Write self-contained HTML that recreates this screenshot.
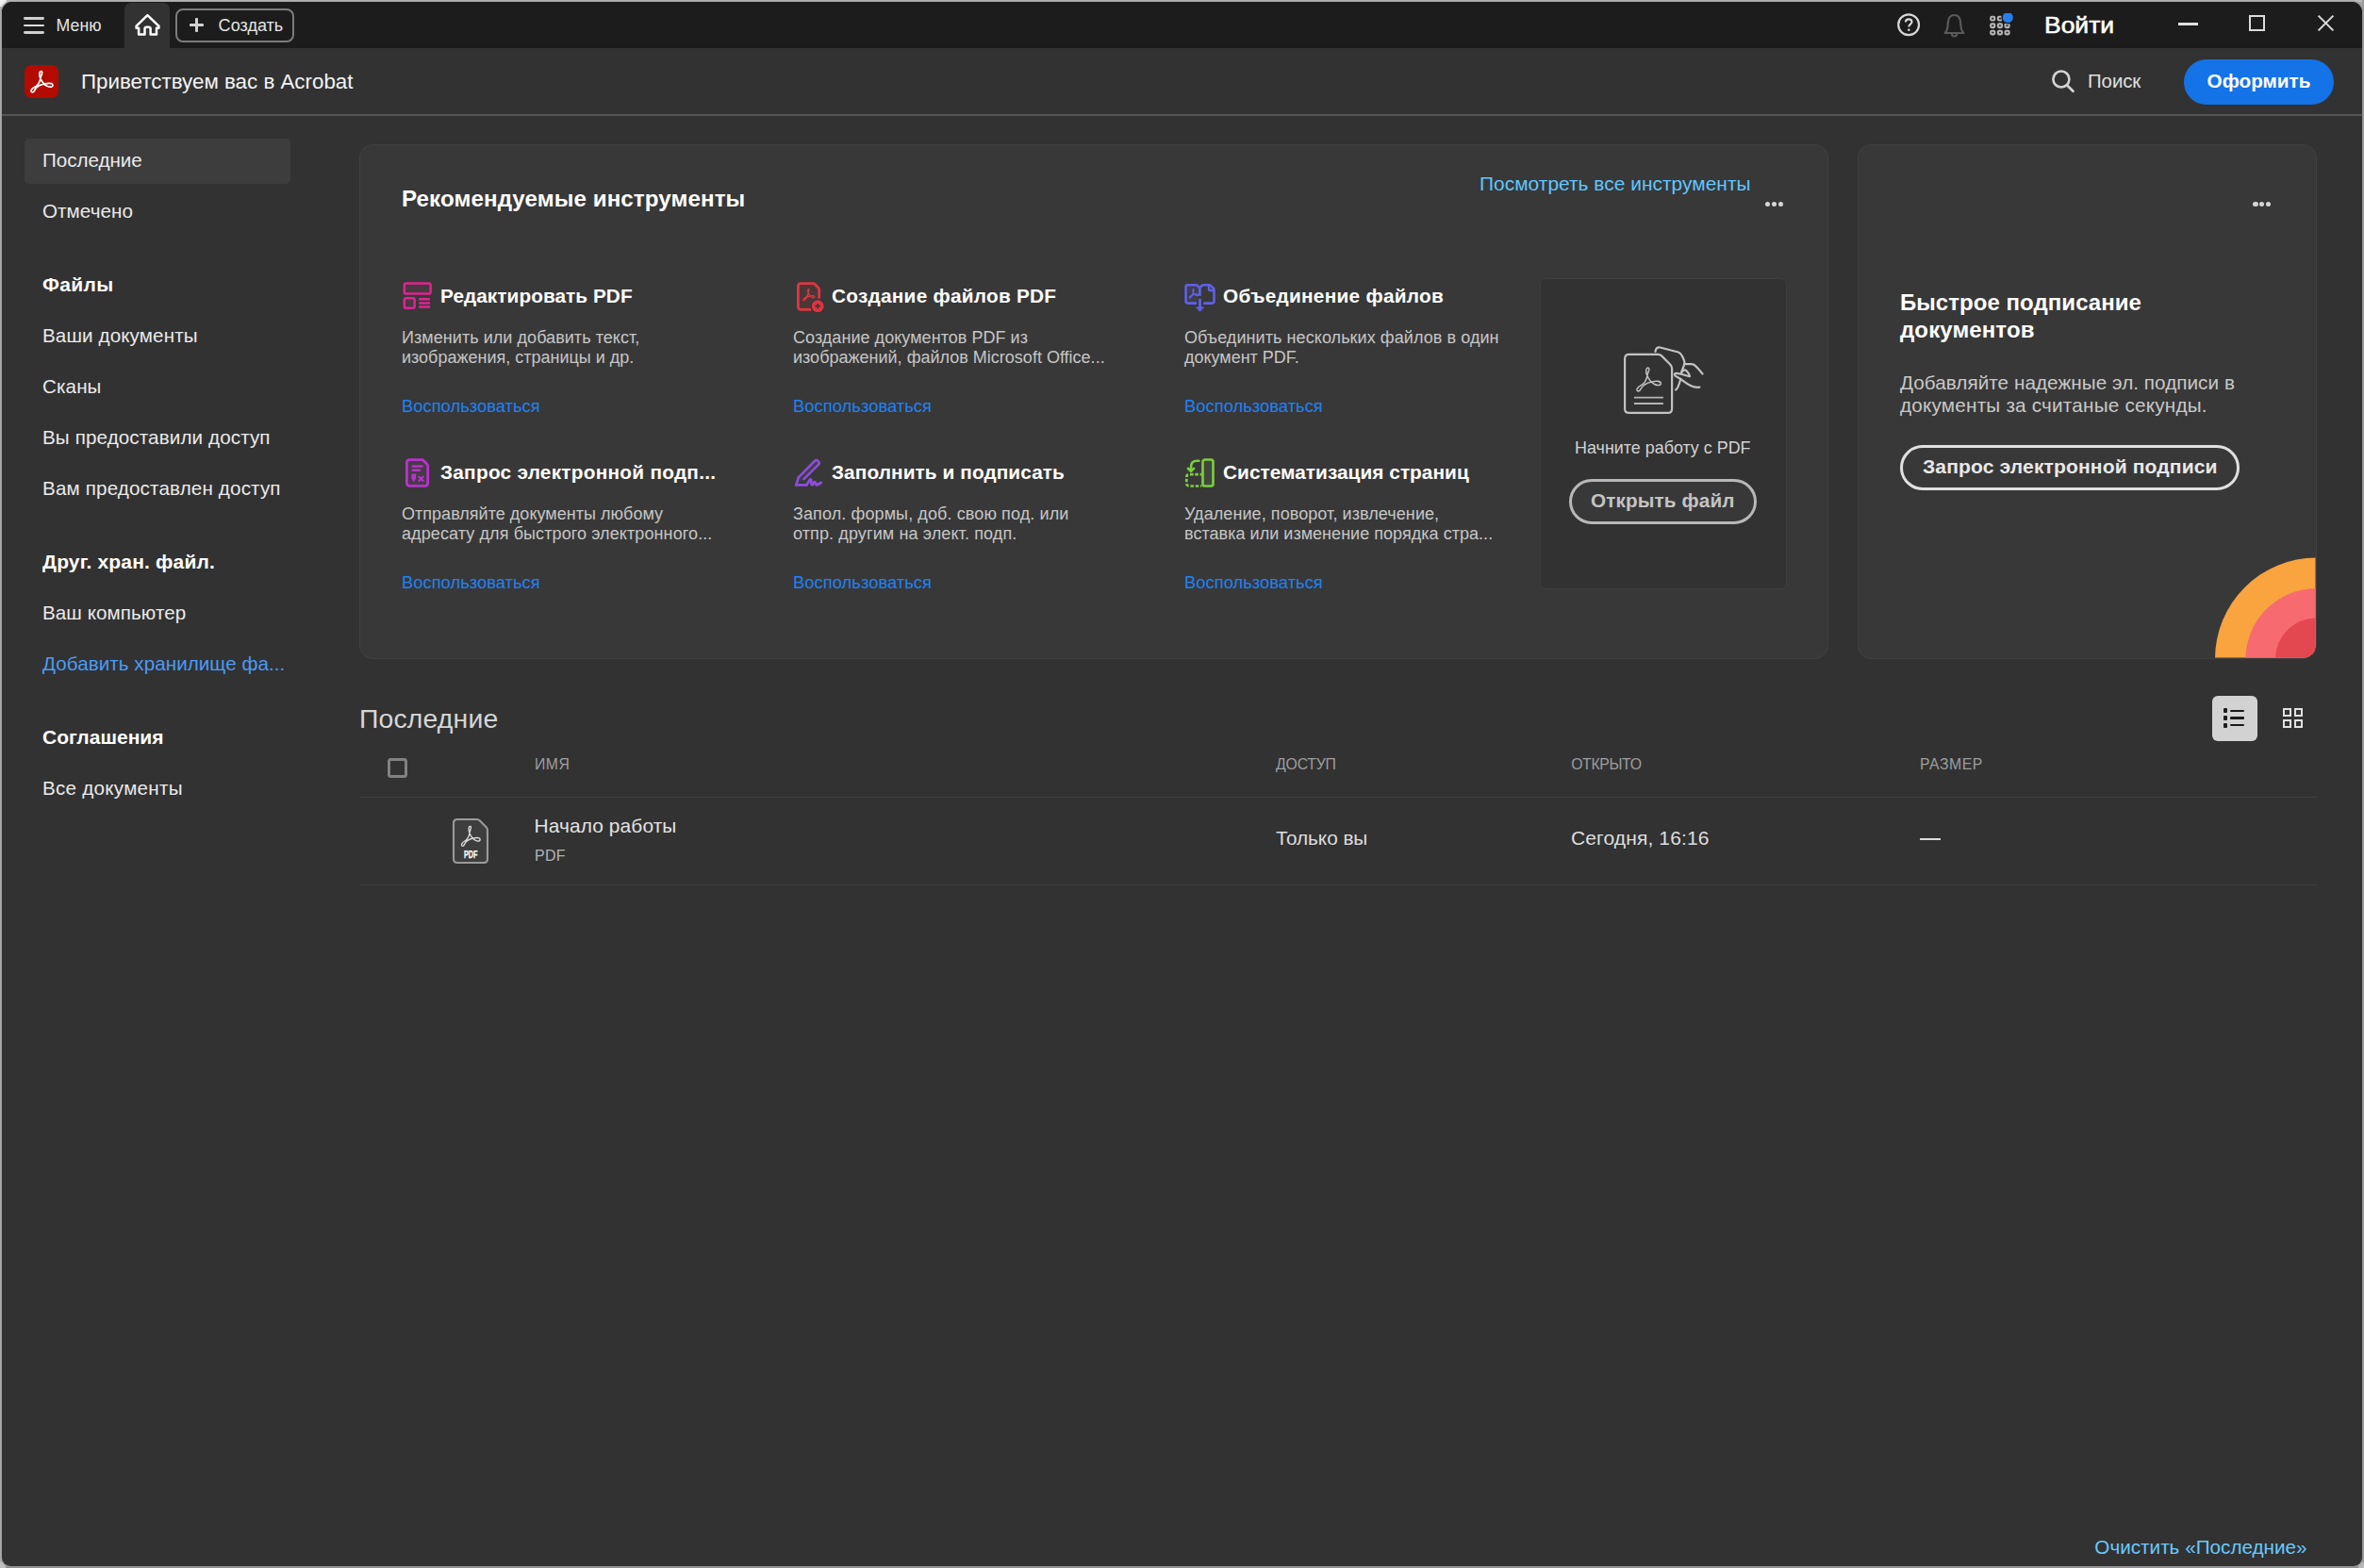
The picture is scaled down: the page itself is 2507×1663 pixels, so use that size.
<!DOCTYPE html>
<html><head><meta charset="utf-8"><title>Acrobat</title>
<style>
html,body{margin:0;padding:0;}
body{width:2507px;height:1663px;overflow:hidden;background:#a4a4a4;font-family:"Liberation Sans",sans-serif;position:relative;}
.b{position:absolute;box-sizing:border-box;display:block;}
.t{position:absolute;white-space:nowrap;line-height:40px;}
</style></head><body>
<div class="b" style="left:0px;top:0px;width:2507px;height:2px;background:#bababa"></div>
<div class="b" style="left:0px;top:0px;width:2px;height:1663px;background:#b0b0b0"></div>
<div class="b" style="left:2505px;top:0px;width:2px;height:1663px;background:#9c9c9c"></div>
<div class="b" style="left:0px;top:1661px;width:2507px;height:2px;background:#8e8e8e"></div>
<div class="b" style="left:0px;top:0px;width:7px;height:7px;background:linear-gradient(135deg,#f4f4f4 0%,#ececec 45%,#c4c4c4 75%)"></div>
<div class="b" style="left:2501px;top:1657px;width:6px;height:6px;background:#b8b8b8"></div>
<div class="b" style="left:0px;top:1657px;width:6px;height:6px;background:#c0c0c0"></div>
<div class="b" style="left:2px;top:2px;width:2503px;height:1659px;background:#323232;border-radius:11px 11px 9px 9px;box-shadow:0 0 0 1.5px rgba(150,150,150,0.55)"></div>
<div class="b" style="left:2px;top:2px;width:2503px;height:49px;background:#1c1c1c;border-radius:11px 11px 0 0"></div>
<div class="b" style="left:25px;top:18.05px;width:21.6px;height:2.8999999999999986px;background:#d0d0d0;border-radius:1.4px"></div>
<div class="b" style="left:25px;top:25.55px;width:21.6px;height:2.8999999999999986px;background:#dcdcdc;border-radius:1.4px"></div>
<div class="b" style="left:25px;top:33.05px;width:21.6px;height:2.9000000000000057px;background:#d0d0d0;border-radius:1.4px"></div>
<div class="t" style="left:59.50px;top:7px;font-size:17.7px;color:#e4e4e4;font-weight:normal;letter-spacing:0.110px;">Меню</div>
<div class="b" style="left:132px;top:3px;width:48px;height:48px;background:#323232;border-radius:7px 7px 0 0"></div>
<svg class="b" style="left:140px;top:10px;" width="34" height="32" viewBox="0 0 34 32"><path d="M16.4 6.2 L4.6 17.6 V19.8 H7.1 V26.5 H13.5 V20.8 Q13.5 18.8 15.5 18.8 H17.6 Q19.6 18.8 19.6 20.8 V26.5 H26 V19.8 H28.4 V17.6 Z" fill="none" stroke="#ffffff" stroke-width="2.5" stroke-linejoin="round"/></svg>
<div class="b" style="left:186px;top:9px;width:126px;height:36px;border:2px solid #7c7c7c;border-radius:8px"></div>
<div class="b" style="left:201px;top:25.2px;width:15px;height:2.6000000000000014px;background:#d2d2d2;border-radius:1px"></div>
<div class="b" style="left:207.2px;top:19px;width:2.6000000000000227px;height:15px;background:#d2d2d2;border-radius:1px"></div>
<div class="t" style="left:231.60px;top:7px;font-size:18px;color:#e4e4e4;font-weight:normal;letter-spacing:0.039px;">Создать</div>
<svg class="b" style="left:2010px;top:12px;" width="28" height="28" viewBox="0 0 28 28"><circle cx="14.1" cy="14.3" r="10.9" fill="none" stroke="#d8d8d8" stroke-width="2.2"/><path d="M10.9 11.6 C10.9 9.4 12.3 8.4 14.2 8.4 C16.2 8.4 17.5 9.6 17.5 11.2 C17.5 13.6 14.3 13.6 14.3 16.4" fill="none" stroke="#d8d8d8" stroke-width="2.1"/><circle cx="14.3" cy="19.8" r="1.3" fill="#d8d8d8"/></svg>
<svg class="b" style="left:2058px;top:12px;" width="30" height="30" viewBox="0 0 30 30"><path d="M4.6 23 C7.5 20.5 7.6 17 7.8 12.5 C8 6.5 11 4 14.5 4 C18 4 21 6.5 21.2 12.5 C21.4 17 21.5 20.5 24.4 23 Z" fill="none" stroke="#5a5a5a" stroke-width="2.2" stroke-linejoin="round" stroke-linecap="round"/><path d="M11.8 23.5 C11.8 27.5 17.2 27.5 17.2 23.5" fill="none" stroke="#5a5a5a" stroke-width="2.1"/></svg>
<svg class="b" style="left:2108px;top:14px;" width="30" height="26" viewBox="0 0 30 26"><rect x="3.2" y="3.8" width="4.1" height="3.7" rx="1.1" fill="none" stroke="#b4b4b4" stroke-width="2.1"/><rect x="10.9" y="3.8" width="4.1" height="3.7" rx="1.1" fill="none" stroke="#b4b4b4" stroke-width="2.1"/><rect x="18.5" y="3.8" width="4.1" height="3.7" rx="1.1" fill="none" stroke="#b4b4b4" stroke-width="2.1"/><rect x="3.2" y="11.4" width="4.1" height="3.7" rx="1.1" fill="none" stroke="#b4b4b4" stroke-width="2.1"/><rect x="10.9" y="11.4" width="4.1" height="3.7" rx="1.1" fill="none" stroke="#b4b4b4" stroke-width="2.1"/><rect x="18.5" y="11.4" width="4.1" height="3.7" rx="1.1" fill="none" stroke="#b4b4b4" stroke-width="2.1"/><rect x="3.2" y="18.7" width="4.1" height="3.7" rx="1.1" fill="none" stroke="#b4b4b4" stroke-width="2.1"/><rect x="10.9" y="18.7" width="4.1" height="3.7" rx="1.1" fill="none" stroke="#b4b4b4" stroke-width="2.1"/><rect x="18.5" y="18.7" width="4.1" height="3.7" rx="1.1" fill="none" stroke="#b4b4b4" stroke-width="2.1"/><circle cx="21.3" cy="4.5" r="7" fill="#1c1c1c"/><circle cx="21.3" cy="4.5" r="5.5" fill="#2680eb"/></svg>
<div class="t" style="left:2167.86px;top:7px;font-size:23px;color:#fff;transform-origin:0 0;transform:scaleX(1.15);-webkit-text-stroke:0.55px #fff">Войти</div>
<div class="b" style="left:2310px;top:24.3px;width:21px;height:2.3000000000000007px;background:#e0e0e0"></div>
<div class="b" style="left:2385px;top:16px;width:17px;height:17px;border:2px solid #dcdcdc"></div>
<svg class="b" style="left:2455px;top:14px;" width="24" height="24" viewBox="0 0 24 24"><path d="M3.6 2.6 L19.4 18.4 M19.4 2.6 L3.6 18.4" stroke="#dcdcdc" stroke-width="2" fill="none"/></svg>
<div class="b" style="left:2px;top:121px;width:2503px;height:2px;background:#555555"></div>
<div class="b" style="left:26px;top:68.7px;width:36px;height:35.599999999999994px;background:#b30b00;border-radius:7px"></div>
<svg class="b" style="left:26px;top:68px;" width="36" height="37" viewBox="0 0 36 37"><path transform="translate(4.58,5.67) scale(1.1122,1.1378)" d="M3.3 21.2C1.1 20.8 2.1 17.9 6.1 16.1C9.1 14.7 10.6 11.2 11.3 7.6C11.9 4.8 13.7 2.5 12.2 1.8C10.3 1.1 9.5 4.2 10.7 7.4C12 10.8 14.3 14 17.3 15.4C20.2 16.8 23.1 16.5 22.8 14.5C22.5 12.5 18.6 12.7 15 13.4C10.6 14.3 6.9 16.6 5.6 19.2C4.9 20.7 4.4 21.4 3.3 21.2Z" fill="none" stroke="#ffffff" stroke-width="1.556" stroke-linejoin="round"/></svg>
<div class="t" style="left:86.00px;top:67px;font-size:22.35px;color:#f4f4f4;font-weight:normal;letter-spacing:-0.000px;">Приветствуем вас в Acrobat</div>
<svg class="b" style="left:2170px;top:68px;" width="34" height="34" viewBox="0 0 34 34"><circle cx="15.9" cy="16.0" r="8.5" fill="none" stroke="#d4d4d4" stroke-width="2.6"/><path d="M22.2 22.5 L28.5 28.7" stroke="#d4d4d4" stroke-width="2.7" stroke-linecap="round"/></svg>
<div class="t" style="left:2214.00px;top:66px;font-size:20.4px;color:#e0e0e0;font-weight:normal;letter-spacing:-0.054px;">Поиск</div>
<div class="b" style="left:2316px;top:63px;width:159px;height:48px;background:#1473e6;border-radius:24px"></div>
<div class="t" style="left:2316px;width:159px;text-align:center;top:66px;font-size:20.7px;color:#fff;font-weight:bold">Оформить</div>
<div class="b" style="left:26px;top:147px;width:282px;height:48px;background:#3d3d3d;border-radius:5px"></div>
<div class="t" style="left:45.00px;top:150px;font-size:20.6px;color:#eaeaea;font-weight:normal;letter-spacing:-0.013px;">Последние</div>
<div class="t" style="left:45.00px;top:204px;font-size:20.6px;color:#eaeaea;font-weight:normal;letter-spacing:0.068px;">Отмечено</div>
<div class="t" style="left:45.00px;top:282px;font-size:21px;color:#fff;font-weight:bold;letter-spacing:0.367px;">Файлы</div>
<div class="t" style="left:45.00px;top:336px;font-size:20.6px;color:#eaeaea;font-weight:normal;letter-spacing:0.122px;">Ваши документы</div>
<div class="t" style="left:45.00px;top:390px;font-size:20.6px;color:#eaeaea;font-weight:normal;letter-spacing:0.115px;">Сканы</div>
<div class="t" style="left:45.00px;top:444px;font-size:20.6px;color:#eaeaea;font-weight:normal;letter-spacing:0.127px;">Вы предоставили доступ</div>
<div class="t" style="left:45.00px;top:498px;font-size:20.6px;color:#eaeaea;font-weight:normal;letter-spacing:0.160px;">Вам предоставлен доступ</div>
<div class="t" style="left:45.00px;top:576px;font-size:21px;color:#fff;font-weight:bold;letter-spacing:0.166px;">Друг. хран. файл.</div>
<div class="t" style="left:45.00px;top:630px;font-size:20.6px;color:#eaeaea;font-weight:normal;letter-spacing:0.075px;">Ваш компьютер</div>
<div class="t" style="left:45.00px;top:684px;font-size:20.6px;color:#4b9cf5;font-weight:normal;letter-spacing:0.065px;">Добавить хранилище фа...</div>
<div class="t" style="left:45.00px;top:762px;font-size:21px;color:#fff;font-weight:bold;letter-spacing:0.032px;">Соглашения</div>
<div class="t" style="left:45.00px;top:816px;font-size:20.6px;color:#eaeaea;font-weight:normal;letter-spacing:0.269px;">Все документы</div>
<div class="b" style="left:381px;top:153px;width:1558px;height:546px;background:#383838;border:1.5px solid #404040;border-radius:14px"></div>
<div class="t" style="left:426.00px;top:191px;font-size:24.2px;color:#ffffff;font-weight:bold;letter-spacing:0.065px;">Рекомендуемые инструменты</div>
<div class="t" style="left:1569.00px;top:175px;font-size:20.9px;color:#60c6ff;font-weight:normal;letter-spacing:0.037px;">Посмотреть все инструменты</div>
<div class="b" style="left:1872.1px;top:213.8px;width:5.2000000000000455px;height:5.199999999999989px;background:#d6d6d6;border-radius:50%"></div>
<div class="b" style="left:1878.85px;top:213.8px;width:5.2000000000000455px;height:5.199999999999989px;background:#d6d6d6;border-radius:50%"></div>
<div class="b" style="left:1885.6px;top:213.8px;width:5.2000000000000455px;height:5.199999999999989px;background:#d6d6d6;border-radius:50%"></div>
<div class="t" style="left:467.00px;top:294px;font-size:20.8px;color:#ffffff;font-weight:bold;letter-spacing:0.047px;">Редактировать PDF</div>
<div class="t" style="left:426.00px;top:338px;font-size:18.0px;color:#c6c6c6;font-weight:normal;letter-spacing:0.054px;">Изменить или добавить текст,</div>
<div class="t" style="left:426.00px;top:359px;font-size:18.0px;color:#c6c6c6;font-weight:normal;letter-spacing:0.001px;">изображения, страницы и др.</div>
<div class="t" style="left:426.00px;top:411px;font-size:18.3px;color:#1f82f5;font-weight:normal;letter-spacing:0.053px;">Воспользоваться</div>
<div class="t" style="left:882.00px;top:294px;font-size:20.8px;color:#ffffff;font-weight:bold;letter-spacing:0.248px;">Создание файлов PDF</div>
<div class="t" style="left:841.00px;top:338px;font-size:18.0px;color:#c6c6c6;font-weight:normal;letter-spacing:0.046px;">Создание документов PDF из</div>
<div class="t" style="left:841.00px;top:359px;font-size:18.0px;color:#c6c6c6;font-weight:normal;letter-spacing:0.006px;">изображений, файлов Microsoft Office...</div>
<div class="t" style="left:841.00px;top:411px;font-size:18.3px;color:#1f82f5;font-weight:normal;letter-spacing:0.075px;">Воспользоваться</div>
<div class="t" style="left:1297.00px;top:294px;font-size:20.8px;color:#ffffff;font-weight:bold;letter-spacing:0.262px;">Объединение файлов</div>
<div class="t" style="left:1256.00px;top:338px;font-size:18.0px;color:#c6c6c6;font-weight:normal;letter-spacing:0.074px;">Объединить нескольких файлов в один</div>
<div class="t" style="left:1256.00px;top:359px;font-size:18.0px;color:#c6c6c6;font-weight:normal;letter-spacing:-0.019px;">документ PDF.</div>
<div class="t" style="left:1256.00px;top:411px;font-size:18.3px;color:#1f82f5;font-weight:normal;letter-spacing:0.060px;">Воспользоваться</div>
<div class="t" style="left:467.00px;top:481px;font-size:20.8px;color:#ffffff;font-weight:bold;letter-spacing:0.258px;">Запрос электронной подп...</div>
<div class="t" style="left:426.00px;top:525px;font-size:18.0px;color:#c6c6c6;font-weight:normal;letter-spacing:0.026px;">Отправляйте документы любому</div>
<div class="t" style="left:426.00px;top:546px;font-size:18.0px;color:#c6c6c6;font-weight:normal;letter-spacing:0.099px;">адресату для быстрого электронного...</div>
<div class="t" style="left:426.00px;top:598px;font-size:18.3px;color:#1f82f5;font-weight:normal;letter-spacing:0.053px;">Воспользоваться</div>
<div class="t" style="left:882.00px;top:481px;font-size:20.8px;color:#ffffff;font-weight:bold;letter-spacing:0.088px;">Заполнить и подписать</div>
<div class="t" style="left:841.00px;top:525px;font-size:18.0px;color:#c6c6c6;font-weight:normal;letter-spacing:0.105px;">Запол. формы, доб. свою под. или</div>
<div class="t" style="left:841.00px;top:546px;font-size:18.0px;color:#c6c6c6;font-weight:normal;letter-spacing:0.116px;">отпр. другим на элект. подп.</div>
<div class="t" style="left:841.00px;top:598px;font-size:18.3px;color:#1f82f5;font-weight:normal;letter-spacing:0.075px;">Воспользоваться</div>
<div class="t" style="left:1297.00px;top:481px;font-size:20.8px;color:#ffffff;font-weight:bold;letter-spacing:0.044px;">Систематизация страниц</div>
<div class="t" style="left:1256.00px;top:525px;font-size:18.0px;color:#c6c6c6;font-weight:normal;letter-spacing:0.078px;">Удаление, поворот, извлечение,</div>
<div class="t" style="left:1256.00px;top:546px;font-size:18.0px;color:#c6c6c6;font-weight:normal;letter-spacing:0.035px;">вставка или изменение порядка стра...</div>
<div class="t" style="left:1256.00px;top:598px;font-size:18.3px;color:#1f82f5;font-weight:normal;letter-spacing:0.060px;">Воспользоваться</div>
<div class="b" style="left:1633px;top:295px;width:261.5px;height:329.5px;background:#323232;border:1.8px solid #3f3f3f;border-radius:6.5px"></div>
<svg class="b" style="left:1722px;top:355px;" width="90" height="90" viewBox="0 0 90 90"><g fill="none" stroke="#c2c2c2" stroke-width="2.2" stroke-linecap="round" stroke-linejoin="round"><path d="M5 20.9 H35.5 Q37.5 20.9 39 22.4 L48.3 31.8 Q50 33.5 50 36 V78.4 Q50 82.9 45.5 82.9 H4.5 Q0 82.9 0 78.4 V25.4 Q0 20.9 4.5 20.9 Z" transform="translate(1.1,0)"/><g transform="translate(1.5,0.3)"><path d="M32 17.6 C32.5 14 34 12.6 37 13.2 L56.3 18.2 C58.5 19 59.5 20.5 60.5 22.5 L62.5 27 C63.3 29 62.8 30.5 62.2 32.5 L59.7 39.4" /><path d="M62.8 30.9 H70.5 C73.5 30.9 75.5 33.5 82.1 41.2" /><path d="M60 39.5 C61 37.5 63 36.2 65 38 C67 40 68 42 68.5 43.9 C64 43 58 40.5 54 40.5 C51.5 40.5 52 43 54.5 44.2 C62 47.5 68 56.5 78.8 55.4" /><path d="M58.8 46.5 C57.5 51 56.5 56.5 53.6 58.1" /></g></g><path d="M11 66.6 H41.9 M11 73 H41.9" stroke="#b4b4b4" stroke-width="1.9" fill="none"/><path transform="translate(11.24,32.94) scale(1.2293,1.2704)" d="M3.3 21.2C1.1 20.8 2.1 17.9 6.1 16.1C9.1 14.7 10.6 11.2 11.3 7.6C11.9 4.8 13.7 2.5 12.2 1.8C10.3 1.1 9.5 4.2 10.7 7.4C12 10.8 14.3 14 17.3 15.4C20.2 16.8 23.1 16.5 22.8 14.5C22.5 12.5 18.6 12.7 15 13.4C10.6 14.3 6.9 16.6 5.6 19.2C4.9 20.7 4.4 21.4 3.3 21.2Z" fill="none" stroke="#c2c2c2" stroke-width="1.200" stroke-linejoin="round"/></svg>
<div class="t" style="left:1670.10px;top:455px;font-size:17.9px;color:#d2d2d2;font-weight:normal;letter-spacing:0.006px;">Начните работу с PDF</div>
<div class="b" style="left:1664px;top:507.7px;width:199px;height:48.30000000000001px;background:#383838;border:3.2px solid #b8b8b8;border-radius:25px"></div>
<div class="t" style="left:1687.10px;top:511px;font-size:20.7px;color:#c4c4c4;font-weight:bold;letter-spacing:0.127px;">Открыть файл</div>
<div class="b" style="left:1970px;top:153px;width:487px;height:546px;background:#383838;border:1.5px solid #404040;border-radius:14px;overflow:hidden"></div>
<svg class="b" style="left:1970px;top:153px" width="487" height="546" viewBox="0 0 487 546"><defs><clipPath id="rc"><rect x="1.5" y="1.5" width="484" height="543" rx="12.5"/></clipPath></defs><g clip-path="url(#rc)"><circle cx="486.5" cy="546" r="107.5" fill="#f9a43f"/><circle cx="486.5" cy="546" r="75" fill="#f76b70"/><circle cx="486.5" cy="546" r="43.5" fill="#e34850"/></g></svg>
<div class="b" style="left:2389.4px;top:213.8px;width:5.199999999999818px;height:5.199999999999989px;background:#d6d6d6;border-radius:50%"></div>
<div class="b" style="left:2396.15px;top:213.8px;width:5.199999999999818px;height:5.199999999999989px;background:#d6d6d6;border-radius:50%"></div>
<div class="b" style="left:2402.9px;top:213.8px;width:5.199999999999818px;height:5.199999999999989px;background:#d6d6d6;border-radius:50%"></div>
<div class="t" style="left:2015.00px;top:301px;font-size:24px;color:#ffffff;font-weight:bold;letter-spacing:0.049px;">Быстрое подписание</div>
<div class="t" style="left:2015.00px;top:330px;font-size:24px;color:#ffffff;font-weight:bold;letter-spacing:0.116px;">документов</div>
<div class="t" style="left:2015.00px;top:386px;font-size:20.7px;color:#c8c8c8;font-weight:normal;letter-spacing:0.043px;">Добавляйте надежные эл. подписи в</div>
<div class="t" style="left:2015.00px;top:410px;font-size:20.7px;color:#c8c8c8;font-weight:normal;letter-spacing:0.217px;">документы за считаные секунды.</div>
<div class="b" style="left:2015.4px;top:472.2px;width:359.5999999999999px;height:47.80000000000001px;border:3px solid #e0e0e0;border-radius:24px"></div>
<div class="t" style="left:2039.00px;top:475px;font-size:21.1px;color:#e8e8e8;font-weight:bold;letter-spacing:0.113px;">Запрос электронной подписи</div>
<div class="t" style="left:380.90px;top:742px;font-size:28.4px;color:#d6d6d6;font-weight:normal;letter-spacing:0.168px;">Последние</div>
<div class="b" style="left:2346px;top:738px;width:48px;height:48px;background:#d2d2d2;border-radius:6px"></div>
<div class="b" style="left:2357.6px;top:751.4px;width:4.400000000000091px;height:5.0px;background:#1e1e1e;border-radius:0.9px"></div>
<div class="b" style="left:2365.2px;top:752.8px;width:14.900000000000091px;height:2.2000000000000455px;background:#1a1a1a;border-radius:1.1px"></div>
<div class="b" style="left:2357.6px;top:759.0px;width:4.400000000000091px;height:5.0px;background:#1e1e1e;border-radius:0.9px"></div>
<div class="b" style="left:2365.2px;top:760.4px;width:14.900000000000091px;height:2.2000000000000455px;background:#1a1a1a;border-radius:1.1px"></div>
<div class="b" style="left:2357.6px;top:766.5px;width:4.400000000000091px;height:5.0px;background:#1e1e1e;border-radius:0.9px"></div>
<div class="b" style="left:2365.2px;top:767.9px;width:14.900000000000091px;height:2.2000000000000455px;background:#1a1a1a;border-radius:1.1px"></div>
<div class="b" style="left:2421px;top:751px;width:9.099999999999909px;height:9.100000000000023px;border:2px solid #e0e0e0"></div>
<div class="b" style="left:2433px;top:751px;width:9.099999999999909px;height:9.100000000000023px;border:2px solid #e0e0e0"></div>
<div class="b" style="left:2421px;top:763px;width:9.099999999999909px;height:9.100000000000023px;border:2px solid #e0e0e0"></div>
<div class="b" style="left:2433px;top:763px;width:9.099999999999909px;height:9.100000000000023px;border:2px solid #e0e0e0"></div>
<div class="b" style="left:411px;top:804px;width:21px;height:21px;border:3px solid #828282;border-radius:3.5px"></div>
<div class="t" style="left:566.90px;top:791px;font-size:15.8px;color:#9e9e9e;font-weight:normal;letter-spacing:0.600px;">ИМЯ</div>
<div class="t" style="left:1353.10px;top:791px;font-size:15.8px;color:#9e9e9e;font-weight:normal;letter-spacing:-0.214px;">ДОСТУП</div>
<div class="t" style="left:1666.20px;top:791px;font-size:15.8px;color:#9e9e9e;font-weight:normal;letter-spacing:-0.356px;">ОТКРЫТО</div>
<div class="t" style="left:2036.10px;top:791px;font-size:15.8px;color:#9e9e9e;font-weight:normal;letter-spacing:0.502px;">РАЗМЕР</div>
<div class="b" style="left:381px;top:845px;width:2076px;height:1px;background:#3f3f3f"></div>
<div class="b" style="left:381px;top:938px;width:2076px;height:1px;background:#3f3f3f"></div>
<svg class="b" style="left:478px;top:866px;" width="44" height="52" viewBox="0 0 44 52"><path d="M3 7 Q3 3 7 3 H27.5 Q29.5 3 31 4.5 L37.6 11.2 Q39 12.7 39 14.7 V45 Q39 49 35 49 H7 Q3 49 3 45 Z" fill="#3e3e3e" stroke="#9a9a9a" stroke-width="2.1"/><path transform="translate(9.40,8.58) scale(0.9512,1.0714)" d="M3.3 21.2C1.1 20.8 2.1 17.9 6.1 16.1C9.1 14.7 10.6 11.2 11.3 7.6C11.9 4.8 13.7 2.5 12.2 1.8C10.3 1.1 9.5 4.2 10.7 7.4C12 10.8 14.3 14 17.3 15.4C20.2 16.8 23.1 16.5 22.8 14.5C22.5 12.5 18.6 12.7 15 13.4C10.6 14.3 6.9 16.6 5.6 19.2C4.9 20.7 4.4 21.4 3.3 21.2Z" fill="none" stroke="#d6d6d6" stroke-width="1.434" stroke-linejoin="round"/><text x="21.3" y="43.9" font-family="Liberation Sans, sans-serif" font-weight="bold" font-size="10.4" fill="#ffffff" stroke="#ffffff" stroke-width="0.25" text-anchor="middle" textLength="14.6" lengthAdjust="spacingAndGlyphs">PDF</text></svg>
<div class="t" style="left:566.50px;top:856px;font-size:20.9px;color:#e2e2e2;font-weight:normal;letter-spacing:0.109px;">Начало работы</div>
<div class="t" style="left:566.90px;top:888px;font-size:16.0px;color:#b4b4b4;font-weight:normal;letter-spacing:0.370px;">PDF</div>
<div class="t" style="left:1352.90px;top:869px;font-size:20.8px;color:#dedede;font-weight:normal;letter-spacing:-0.050px;">Только вы</div>
<div class="t" style="left:1666.00px;top:869px;font-size:21.0px;color:#dedede;font-weight:normal;letter-spacing:0.132px;">Сегодня, 16:16</div>
<div class="b" style="left:2036px;top:889px;width:21.59999999999991px;height:2px;background:#dcdcdc"></div>
<div class="t" style="left:2221.30px;top:1621px;font-size:20.7px;color:#68caff;font-weight:normal;letter-spacing:0.006px;">Очистить «Последние»</div>
<svg class="b" style="left:424px;top:296px;" width="38" height="36" viewBox="0 0 38 36"><g fill="#483840" stroke="#de2590" stroke-width="2.5"><rect x="4.8" y="4.5" width="27.8" height="11.1" rx="1.7"/><rect x="4.8" y="20.2" width="10.9" height="10.5" rx="1.7"/></g><g stroke="#de2590" stroke-width="2.5" stroke-linecap="round"><path d="M21.2 21.3 H31 M21.2 25.4 H31 M21.2 29.5 H31"/></g></svg>
<svg class="b" style="left:841px;top:296px;" width="40" height="38" viewBox="0 0 40 38"><path d="M19.5 32.3 H8.4 Q5.4 32.3 5.4 29.3 V7.6 Q5.4 4.6 8.4 4.6 H21 Q22.3 4.6 23.2 5.5 L26.9 9.3 Q27.7 10.2 27.7 11.4 V20.6" fill="#4a3838" stroke="#e0343f" stroke-width="2.8" stroke-linejoin="round"/><circle cx="26.2" cy="28.7" r="7.7" fill="#383838"/><circle cx="26.2" cy="28.7" r="6.4" fill="#e0343f"/><path d="M23.4 28.7 H29 M26.2 25.9 V31.5" stroke="#3a3636" stroke-width="1.7"/><path transform="translate(9.63,9.54) scale(0.5854,0.6224)" d="M3.3 21.2C1.1 20.8 2.1 17.9 6.1 16.1C9.1 14.7 10.6 11.2 11.3 7.6C11.9 4.8 13.7 2.5 12.2 1.8C10.3 1.1 9.5 4.2 10.7 7.4C12 10.8 14.3 14 17.3 15.4C20.2 16.8 23.1 16.5 22.8 14.5C22.5 12.5 18.6 12.7 15 13.4C10.6 14.3 6.9 16.6 5.6 19.2C4.9 20.7 4.4 21.4 3.3 21.2Z" fill="none" stroke="#e0343f" stroke-width="2.070" stroke-linejoin="round"/></svg>
<svg class="b" style="left:1253px;top:296px;" width="40" height="38" viewBox="0 0 40 38"><path d="M16 25.6 H6.6 Q4.6 25.6 4.6 23.6 V8.2 Q4.6 6.2 6.6 6.2 H15.2 Q16.2 6.2 16.9 6.9 L19.4 9.5" fill="#3e3e4c" stroke="#6060e6" stroke-width="2.6" stroke-linejoin="round"/><path d="M19.4 9.5 V17.9" stroke="#6060e6" stroke-width="2.8" fill="none"/><path d="M19.4 9.5 L21.4 7 Q22.1 6.2 23.2 6.2 H29.6 Q30.4 6.2 31 6.8 L33.9 9.8 Q34.5 10.4 34.5 11.2 V23.6 Q34.5 25.6 32.5 25.6 H23.2" fill="none" stroke="#6060e6" stroke-width="2.6" stroke-linejoin="round"/><path d="M29 6.6 V11 Q29 12 30 12 H34.2" fill="none" stroke="#6060e6" stroke-width="2.4"/><path d="M19.5 22 V31" stroke="#6060e6" stroke-width="2.8" stroke-linecap="round"/><path d="M15.6 29.9 L19.5 34.3 L23.4 29.9 Z" fill="#6060e6" stroke="#6060e6" stroke-width="1" stroke-linejoin="round"/><path transform="translate(7.52,9.78) scale(0.4390,0.4796)" d="M3.3 21.2C1.1 20.8 2.1 17.9 6.1 16.1C9.1 14.7 10.6 11.2 11.3 7.6C11.9 4.8 13.7 2.5 12.2 1.8C10.3 1.1 9.5 4.2 10.7 7.4C12 10.8 14.3 14 17.3 15.4C20.2 16.8 23.1 16.5 22.8 14.5C22.5 12.5 18.6 12.7 15 13.4C10.6 14.3 6.9 16.6 5.6 19.2C4.9 20.7 4.4 21.4 3.3 21.2Z" fill="none" stroke="#6060e6" stroke-width="2.830" stroke-linejoin="round"/></svg>
<svg class="b" style="left:427px;top:483px;" width="40" height="38" viewBox="0 0 40 38"><path d="M7.4 4.6 H20 Q21.3 4.6 22.2 5.5 L25.9 9.3 Q26.7 10.2 26.7 11.4 V29.3 Q26.7 32.3 23.7 32.3 H7.4 Q4.4 32.3 4.4 29.3 V7.6 Q4.4 4.6 7.4 4.6 Z" fill="#473a48" stroke="#b832cc" stroke-width="2.8" stroke-linejoin="round"/><path d="M10.7 11.6 H20.6 M10.7 15.7 H18" stroke="#b832cc" stroke-width="2.5" stroke-linecap="round"/><path d="M9.4 20.4 Q9.4 19.6 10.2 19.6 H13.3 Q14.1 19.6 14.1 20.4 V24.6 L11.75 28.3 L9.4 24.6 Z" fill="#b832cc"/><path d="M17.4 22.8 L21.6 27 M21.6 22.8 L17.4 27" stroke="#b832cc" stroke-width="2.1" stroke-linecap="round"/></svg>
<svg class="b" style="left:838px;top:483px;" width="40" height="38" viewBox="0 0 40 38"><path d="M6.3 31.3 L8.7 23.3 L25.99 6.01 A2.76 2.76 0 0 1 29.89 9.91 L14.6 25.2" fill="#443b4c" stroke="#8c4ed8" stroke-width="2.6" stroke-linejoin="round" stroke-linecap="round"/><path d="M6.3 31.3 H17.4" stroke="#8c4ed8" stroke-width="2.8" stroke-linecap="round" fill="none"/><path d="M17 31.3 C19 30.5 20 25.2 21.6 25.4 C23.2 25.6 21.5 31 23.2 31.2 C24.6 31.3 24.6 28 26 28.2 C27.2 28.4 26.6 31.2 28 31.3 C29.6 31.4 30.6 29.6 32.8 28.9" stroke="#8c4ed8" stroke-width="2.9" stroke-linecap="round" stroke-linejoin="round" fill="none"/></svg>
<svg class="b" style="left:1253px;top:483px;" width="40" height="38" viewBox="0 0 40 38"><rect x="22.5" y="4.5" width="11" height="28" rx="2.2" fill="#3f473a" stroke="#7ccf3c" stroke-width="2.6"/><path d="M21.2 20.2 H8.3 Q5.3 20.2 5.3 23.2 V29.5 Q5.3 32.5 8.3 32.5 H21.2" fill="none" stroke="#7ccf3c" stroke-width="2.7" stroke-dasharray="3.6 1.7" stroke-dashoffset="2.0"/><path d="M18.4 5.8 H16.4 Q10 5.8 10 12.4 V16" fill="none" stroke="#7ccf3c" stroke-width="2.6" stroke-linecap="round"/><path d="M6.9 13.8 L10 16.8 L13.1 13.8" fill="none" stroke="#7ccf3c" stroke-width="2.6" stroke-linecap="round" stroke-linejoin="round"/></svg>
</body></html>
